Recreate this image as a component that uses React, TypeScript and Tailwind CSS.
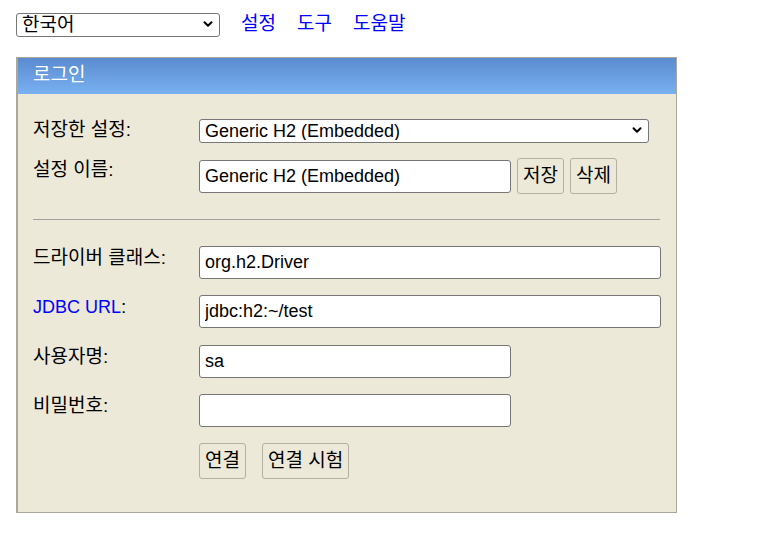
import { ChevronDown } from 'lucide-react';

const font = "font-['Liberation_Sans','Noto_Sans_CJK_KR',sans-serif]";

const Label = ({ children }: { children: React.ReactNode }) => (
  <div className="w-[166px] shrink-0 text-[19px] leading-6 text-black">{children}</div>
);

const Input = ({ value, wide }: { value?: string; wide?: boolean }) => (
  <input
    type="text"
    defaultValue={value}
    className={`h-[33px] ${wide ? 'w-[462px]' : 'w-[312px]'} rounded-[3px] border border-[#767676] bg-white px-[5px] text-[18px] text-black outline-none`}
  />
);

const Button = ({ children }: { children: React.ReactNode }) => (
  <button className="h-9 rounded-[3px] border border-[#b3afa2] bg-[#ece9d8] px-[5px] text-[19px] leading-none text-black">
    {children}
  </button>
);

export default function App() {
  return (
    <div className={`${font} min-h-screen bg-white pt-[10px] pl-4 text-[18px]`}>
      {/* Top bar */}
      <div className="flex items-center">
        <div className="relative h-6 w-[204px]">
          <select className="h-6 w-full appearance-none rounded-[3px] border border-[#767676] bg-white pl-[5px] text-[19px] leading-none text-black outline-none">
            <option>한국어</option>
          </select>
          <ChevronDown className="pointer-events-none absolute right-[5px] top-[5px] h-[14px] w-[14px] text-black" strokeWidth={3.5} />
        </div>
        <div className="ml-[21px] flex gap-[21px] text-[19px] text-[#0000ff]">
          <a href="#">설정</a>
          <a href="#">도구</a>
          <a href="#">도움말</a>
        </div>
      </div>

      {/* Login panel */}
      <div className="mt-[18px] w-[661px] border border-l-2 border-[#aca899] bg-[#ece9d8]">
        <div className="flex h-9 items-center bg-gradient-to-b from-[#5a8bcf] to-[#79b1f1] pl-[15px] text-[19px] text-white">
          로그인
        </div>

        <div className="pl-[15px] pr-[15px] pt-[24px] pb-[33px]">
          <div className="flex">
            <Label>저장한 설정:</Label>
            <div className="relative h-6 w-[450px]">
              <select className="h-6 w-full appearance-none rounded-[3px] border border-[#767676] bg-white pl-[5px] text-[18px] leading-none text-black outline-none">
                <option>Generic H2 (Embedded)</option>
              </select>
              <ChevronDown className="pointer-events-none absolute right-[5px] top-[5px] h-[14px] w-[14px] text-black" strokeWidth={3.5} />
            </div>
          </div>

          <div className="mt-4 flex">
            <Label>설정 이름:</Label>
            <div className="flex items-start gap-[6px]">
              <div className="pt-[2px]">
                <Input value="Generic H2 (Embedded)" />
              </div>
              <Button>저장</Button>
              <Button>삭제</Button>
            </div>
          </div>

          <div className="mt-[25px] h-px w-[627px] bg-[#a0a0a0]" />

          <div className="mt-[26px] flex">
            <Label>드라이버 클래스:</Label>
            <Input value="org.h2.Driver" wide />
          </div>
          <div className="mt-4 flex">
            <Label>
              <span className="text-[18px] text-[#0000ff]">JDBC URL</span>:
            </Label>
            <Input value="jdbc:h2:~/test" wide />
          </div>
          <div className="mt-[17px] flex">
            <Label>사용자명:</Label>
            <Input value="sa" />
          </div>
          <div className="mt-4 flex">
            <Label>비밀번호:</Label>
            <input
              type="password"
              className="h-[33px] w-[312px] rounded-[3px] border border-[#767676] bg-white px-[5px] text-[18px] outline-none"
            />
          </div>
          <div className="mt-4 flex">
            <div className="w-[166px] shrink-0" />
            <div className="flex gap-[16px]">
              <Button>연결</Button>
              <Button>연결 시험</Button>
            </div>
          </div>
        </div>
      </div>
    </div>
  );
}
